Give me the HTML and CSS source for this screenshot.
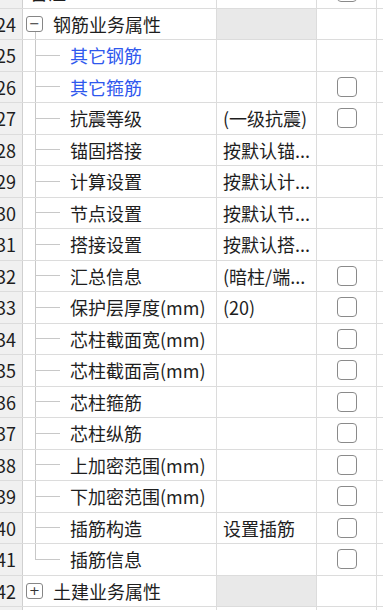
FILE: index.html
```html
<!DOCTYPE html>
<html lang="zh-CN">
<head>
    <meta charset="UTF-8">
    <title>属性列表</title>
    <link rel="stylesheet" href="styles.css">
</head>
<body>
    <div class="grid">
        <div class="row">
            <div class="num">23</div>
            <div class="name top">备注</div>
            <div class="val"></div>
            <div class="chk"><span class="box"></span></div>
            <div class="pad"></div>
        </div>
        <div class="row">
            <div class="num">24</div>
            <div class="name group open"><span class="toggle">−</span>钢筋业务属性</div>
            <div class="val gray"></div>
            <div class="chk"></div>
            <div class="pad"></div>
        </div>
        <div class="row">
            <div class="num">25</div>
            <div class="name"><span class="elbow"></span><span class="link">其它钢筋</span></div>
            <div class="val"></div>
            <div class="chk"></div>
            <div class="pad"></div>
        </div>
        <div class="row">
            <div class="num">26</div>
            <div class="name"><span class="elbow"></span><span class="link">其它箍筋</span></div>
            <div class="val"></div>
            <div class="chk"><span class="box"></span></div>
            <div class="pad"></div>
        </div>
        <div class="row">
            <div class="num">27</div>
            <div class="name"><span class="elbow"></span>抗震等级</div>
            <div class="val">(一级抗震)</div>
            <div class="chk"><span class="box"></span></div>
            <div class="pad"></div>
        </div>
        <div class="row">
            <div class="num">28</div>
            <div class="name"><span class="elbow"></span>锚固搭接</div>
            <div class="val">按默认锚...</div>
            <div class="chk"></div>
            <div class="pad"></div>
        </div>
        <div class="row">
            <div class="num">29</div>
            <div class="name"><span class="elbow"></span>计算设置</div>
            <div class="val">按默认计...</div>
            <div class="chk"></div>
            <div class="pad"></div>
        </div>
        <div class="row">
            <div class="num">30</div>
            <div class="name"><span class="elbow"></span>节点设置</div>
            <div class="val">按默认节...</div>
            <div class="chk"></div>
            <div class="pad"></div>
        </div>
        <div class="row">
            <div class="num">31</div>
            <div class="name"><span class="elbow"></span>搭接设置</div>
            <div class="val">按默认搭...</div>
            <div class="chk"></div>
            <div class="pad"></div>
        </div>
        <div class="row">
            <div class="num">32</div>
            <div class="name"><span class="elbow"></span>汇总信息</div>
            <div class="val">(暗柱/端...</div>
            <div class="chk"><span class="box"></span></div>
            <div class="pad"></div>
        </div>
        <div class="row">
            <div class="num">33</div>
            <div class="name"><span class="elbow"></span>保护层厚度(mm)</div>
            <div class="val">(20)</div>
            <div class="chk"><span class="box"></span></div>
            <div class="pad"></div>
        </div>
        <div class="row">
            <div class="num">34</div>
            <div class="name"><span class="elbow"></span>芯柱截面宽(mm)</div>
            <div class="val"></div>
            <div class="chk"><span class="box"></span></div>
            <div class="pad"></div>
        </div>
        <div class="row">
            <div class="num">35</div>
            <div class="name"><span class="elbow"></span>芯柱截面高(mm)</div>
            <div class="val"></div>
            <div class="chk"><span class="box"></span></div>
            <div class="pad"></div>
        </div>
        <div class="row">
            <div class="num">36</div>
            <div class="name"><span class="elbow"></span>芯柱箍筋</div>
            <div class="val"></div>
            <div class="chk"><span class="box"></span></div>
            <div class="pad"></div>
        </div>
        <div class="row">
            <div class="num">37</div>
            <div class="name"><span class="elbow"></span>芯柱纵筋</div>
            <div class="val"></div>
            <div class="chk"><span class="box"></span></div>
            <div class="pad"></div>
        </div>
        <div class="row">
            <div class="num">38</div>
            <div class="name"><span class="elbow"></span>上加密范围(mm)</div>
            <div class="val"></div>
            <div class="chk"><span class="box"></span></div>
            <div class="pad"></div>
        </div>
        <div class="row">
            <div class="num">39</div>
            <div class="name"><span class="elbow"></span>下加密范围(mm)</div>
            <div class="val"></div>
            <div class="chk"><span class="box"></span></div>
            <div class="pad"></div>
        </div>
        <div class="row">
            <div class="num">40</div>
            <div class="name"><span class="elbow"></span>插筋构造</div>
            <div class="val">设置插筋</div>
            <div class="chk"><span class="box"></span></div>
            <div class="pad"></div>
        </div>
        <div class="row">
            <div class="num">41</div>
            <div class="name"><span class="elbow last"></span>插筋信息</div>
            <div class="val"></div>
            <div class="chk"><span class="box"></span></div>
            <div class="pad"></div>
        </div>
        <div class="row">
            <div class="num">42</div>
            <div class="name group"><span class="toggle">+</span>土建业务属性</div>
            <div class="val gray"></div>
            <div class="chk"></div>
            <div class="pad"></div>
        </div>
        <div class="row">
            <div class="num">43</div>
            <div class="name"></div>
            <div class="val"></div>
            <div class="chk"></div>
            <div class="pad"></div>
        </div>
    </div>
</body>
</html>
```

FILE: styles.css
```css
body {
    margin: 0;
    background: #fff;
    font-family: "Noto Sans CJK SC", "Noto Sans", sans-serif;
    font-size: 18px;
    color: #1e1e1e;
    overflow: hidden;
}

.grid {
    margin-top: -23px;
}

.row {
    display: grid;
    grid-template-columns: 23px 194px 100px 60px 1fr;
    height: 31.5px;
    border-bottom: 1px solid #dcdcdc;
    box-sizing: border-box;
}

.row > div {
    border-right: 1px solid #dcdcdc;
    overflow: hidden;
    white-space: nowrap;
    display: flex;
    align-items: center;
}

.num {
    background: #f0f0f0;
    justify-content: flex-end;
    padding-right: 6px;
    border-right-color: #d0d0d0 !important;
}

.name {
    padding-left: 12px;
}

.name.top {
    padding-left: 7px;
}

.name.group {
    padding-left: 3px;
}

.name.open {
    background: linear-gradient(#c8c8c8, #c8c8c8) 12px 100% / 1px 50% no-repeat;
}

.toggle {
    width: 15px;
    height: 14px;
    border: 1.5px solid #868686;
    border-radius: 3px;
    background: #fff;
    display: flex;
    align-items: center;
    justify-content: center;
    font-family: "DejaVu Sans", sans-serif;
    font-size: 13px;
    line-height: 1;
    color: #333;
    margin-right: 10px;
}

.elbow {
    align-self: stretch;
    width: 25px;
    margin-right: 10px;
    background:
        linear-gradient(#c8c8c8, #c8c8c8) 0 0 / 1px 100% no-repeat,
        linear-gradient(#c8c8c8, #c8c8c8) 0 50% / 100% 1px no-repeat;
}

.elbow.last {
    background:
        linear-gradient(#c8c8c8, #c8c8c8) 0 0 / 1px 50% no-repeat,
        linear-gradient(#c8c8c8, #c8c8c8) 0 50% / 100% 1px no-repeat;
}

.link {
    color: #2f58ee;
}

.val {
    padding-left: 6px;
}

.val.gray {
    background: #e9e9e9;
}

.chk {
    justify-content: center;
}

.box {
    width: 20px;
    height: 20px;
    box-sizing: border-box;
    border: 1.5px solid #8a8a8a;
    border-radius: 4px;
    background: #fff;
}

.pad {
    border-right: none !important;
}
```
